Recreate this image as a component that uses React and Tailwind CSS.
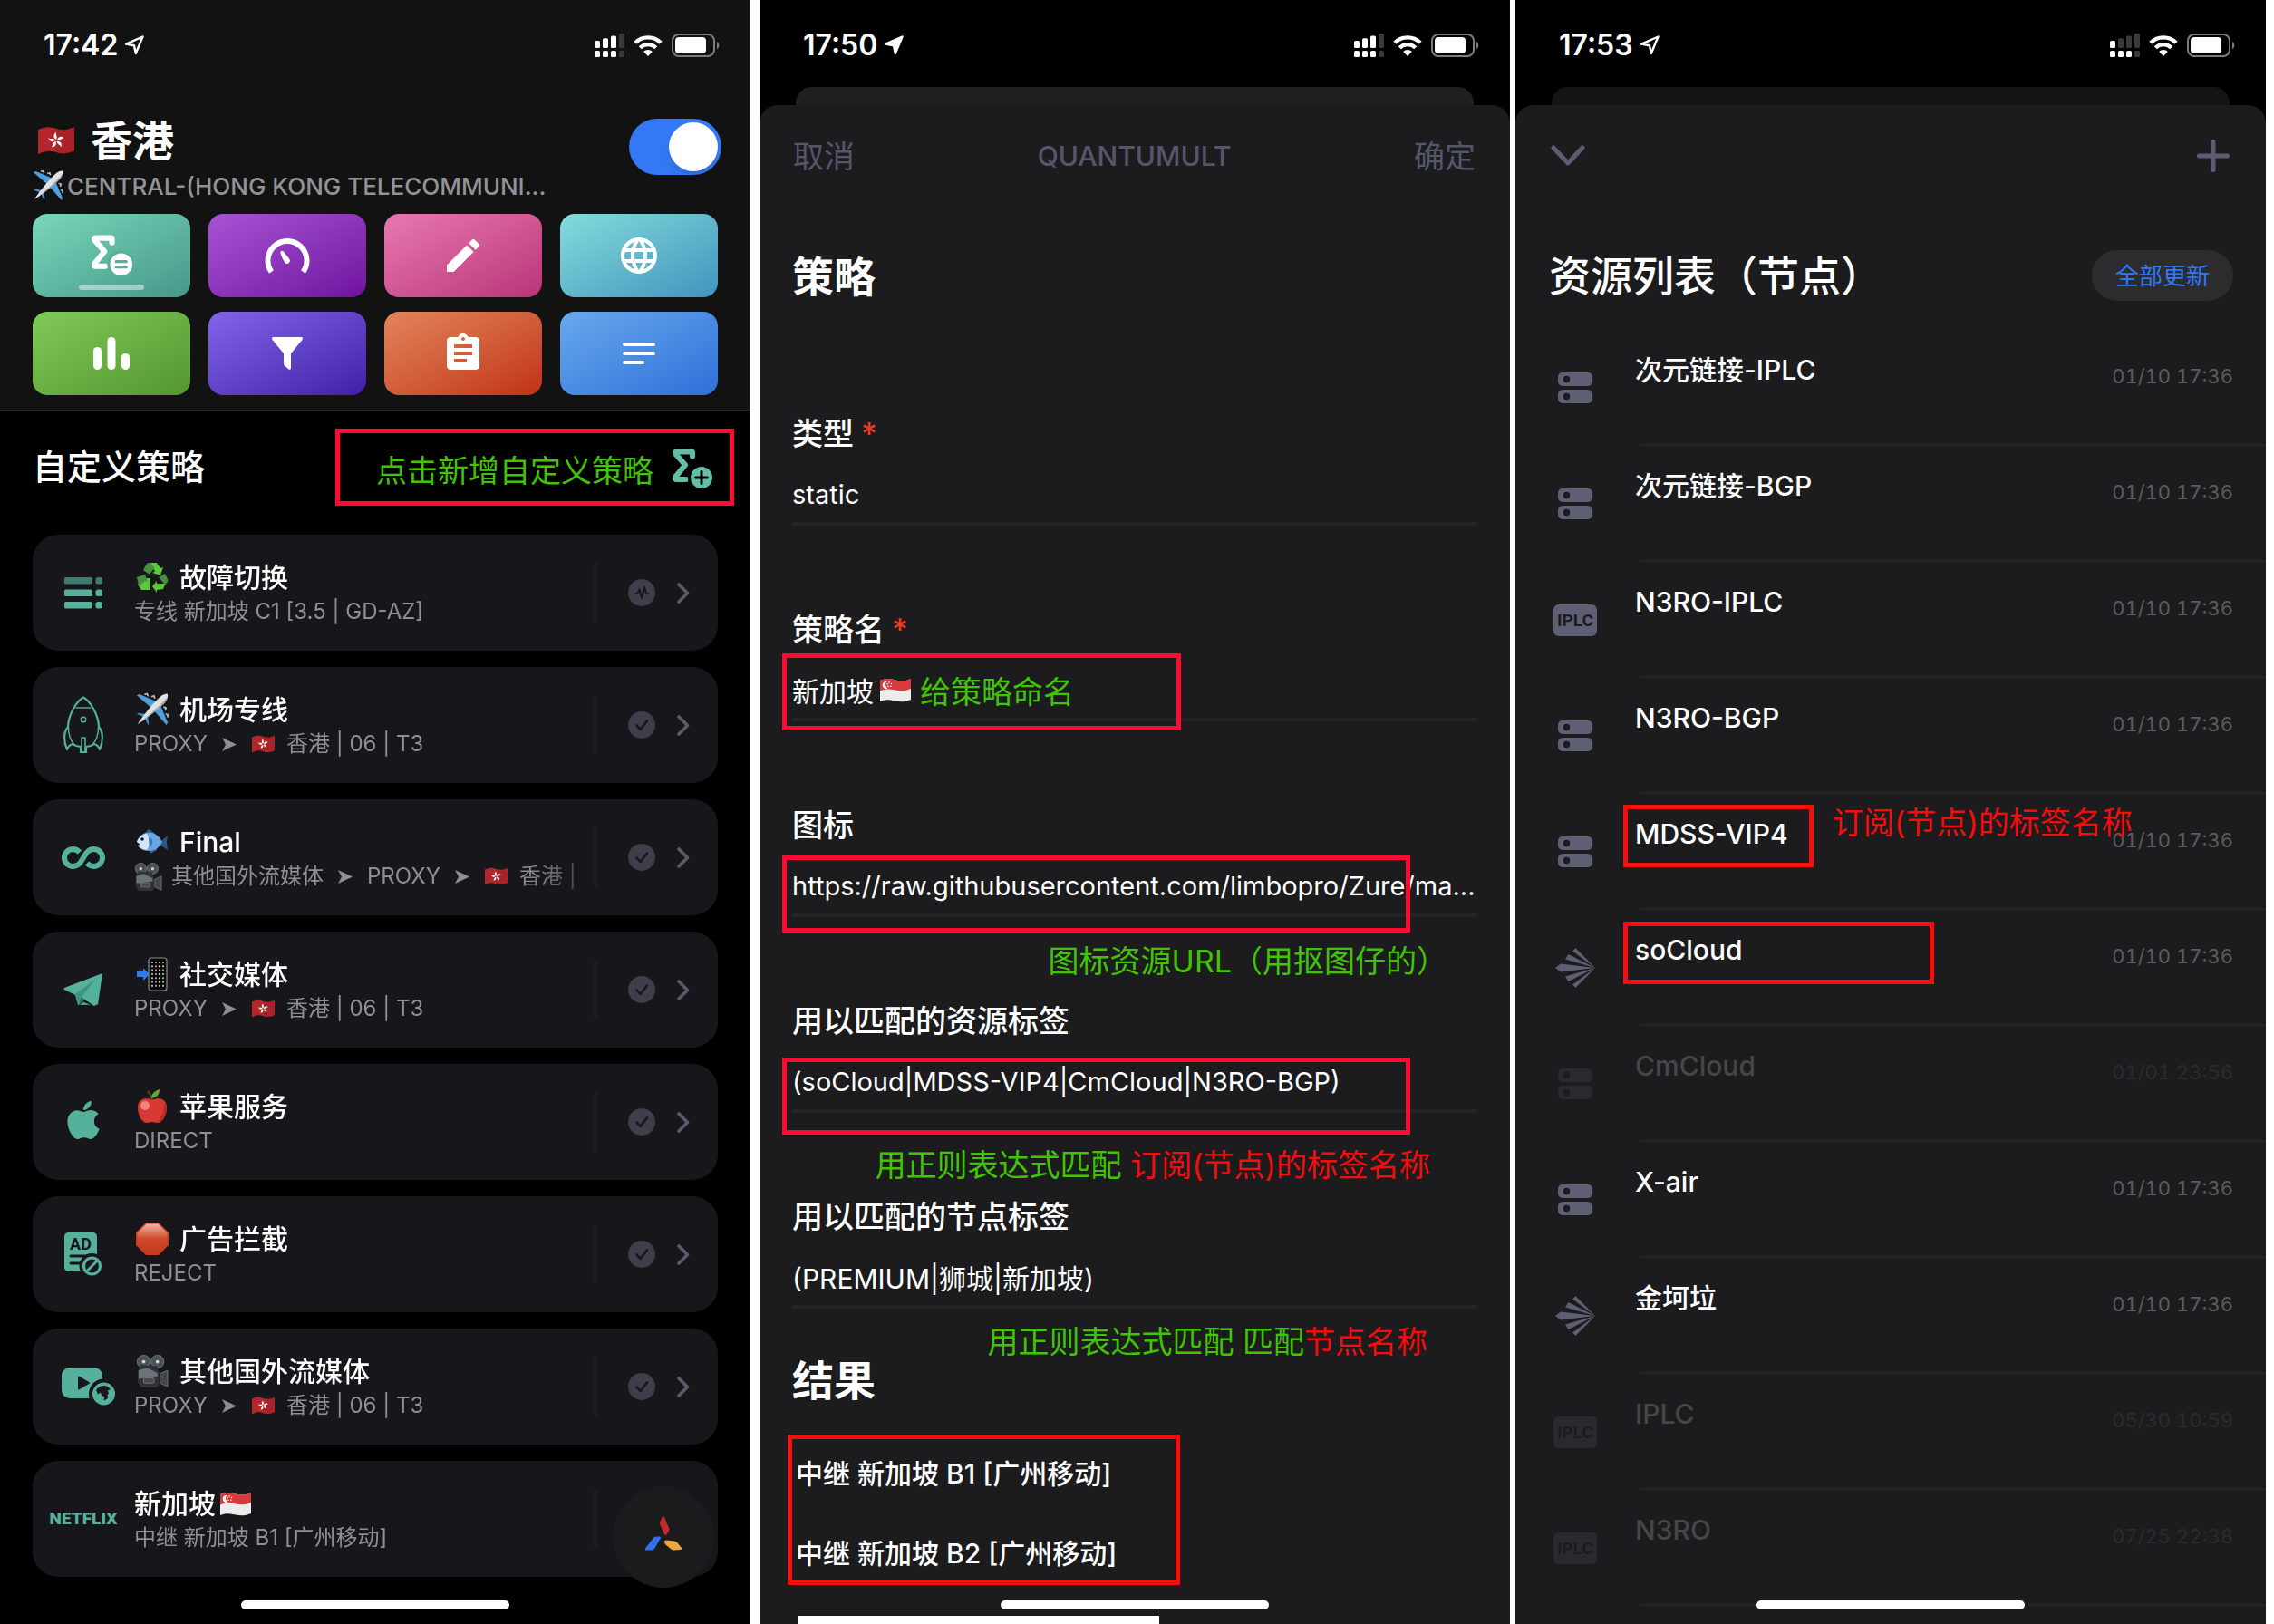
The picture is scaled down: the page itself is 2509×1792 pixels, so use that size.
import React from 'react';
import { MdEdit, MdLanguage, MdAssignment } from 'react-icons/md';
import { FaApple } from 'react-icons/fa';

/* ---------- status bar ---------- */

function LocationArrow({ filled }) {
  return (
    <svg width="24" height="24" viewBox="0 0 24 24" aria-hidden="true">
      <path
        d="M21.5 2.5 13.8 21 12 12.2 3 10.6Z"
        fill={filled ? 'white' : 'none'}
        stroke="white"
        strokeWidth="2.4"
        strokeLinejoin="round"
      />
    </svg>
  );
}

function Signal({ bars }) {
  return (
    <svg width="33" height="27" viewBox="0 0 33 27" aria-hidden="true">
      {[0, 1, 2, 3].map((i) => (
        <g key={i}>
          <rect x={i * 9} y={8 - i * 2.7} width="6" height={8 + i * 2.7} rx="1.6" fill={i < bars ? '#fff' : '#3a3a3a'} />
          <rect x={i * 9} y="19" width="6" height="7" rx="1.6" fill={i < 3 ? '#fff' : '#3a3a3a'} />
        </g>
      ))}
    </svg>
  );
}

function Wifi() {
  return (
    <svg width="32" height="24" viewBox="0 0 32 24" fill="none" stroke="white" strokeWidth="4.4" aria-hidden="true">
      <path d="M1.9 9.2a20 20 0 0 1 28.2 0" />
      <path d="M7.3 14.7a12.3 12.3 0 0 1 17.4 0" />
      <path d="M16 24l-4.9-5a6.9 6.9 0 0 1 9.8 0Z" fill="white" stroke="none" />
    </svg>
  );
}

function Battery() {
  return (
    <svg width="53" height="26" viewBox="0 0 53 26" aria-hidden="true">
      <rect x="1" y="1" width="46" height="24" rx="7" fill="none" stroke="#7c7c7c" strokeWidth="2" />
      <rect x="4" y="4" width="34" height="18" rx="4" fill="white" />
      <path d="M50 9c3 .8 3 7.200 0 8Z" fill="#7c7c7c" />
    </svg>
  );
}

function StatusBar({ time, filled, bars }) {
  return (
    <div className="flex h-24 shrink-0 items-center justify-between pt-1 pr-[34px] pl-12">
      <div className="flex items-center gap-1.5 text-[32px] leading-10 font-semibold">
        <span>{time}</span>
        <LocationArrow filled={filled} />
      </div>
      <div className="flex items-center gap-2.5">
        <Signal bars={bars} />
        <Wifi />
        <Battery />
      </div>
    </div>
  );
}

function HomeIndicator() {
  return <div className="absolute bottom-4 left-1/2 h-2.5 w-[296px] -translate-x-1/2 rounded-full bg-white" />;
}

/* ---------- pictograms ---------- */

function HkFlag({ className }) {
  return (
    <svg viewBox="0 0 42 32" className={className} aria-hidden="true">
      <path d="M1 4C10 0 15 1 21 3s12 2 20-2v26c-8 4-14 4-20 2S9 27 1 31Z" fill="#b5262c" />
      <path d="M21 3c6 2 12 2 20-2v26c-8 4-14 4-20 2Z" fill="#9f2127" opacity=".6" />
      <g fill="white">
        {[0, 72, 144, 216, 288].map((a) => (
          <path key={a} transform={`rotate(${a} 21 16)`} d="M21 15c-4-2.500-3-6.500 0-8C20 9.500 23 11.500 21 15Z" />
        ))}
      </g>
    </svg>
  );
}

function SgFlag({ className }) {
  return (
    <svg viewBox="0 0 36 27" className={className} aria-hidden="true">
      <path d="M1 3C9 0 13 1 18 2.500S28 4 35 1v23c-7 3-12 2.500-17 1.500S8 23 1 26Z" fill="#ececec" />
      <path d="M1 3C9 0 13 1 18 2.500S28 4 35 1v11c-7 3-12 2.500-17 1.500S8 11.500 1 14.500Z" fill="#d83a3e" />
      <path d="M8.500 4a4 4 0 1 0 1 7.500 4.600 4.600 0 0 1-1-7.500Z" fill="white" />
      <g fill="white">
        <circle cx="11" cy="5" r=".8" />
        <circle cx="13.500" cy="6.500" r=".8" />
        <circle cx="12.800" cy="9.300" r=".8" />
        <circle cx="10" cy="9.300" r=".8" />
        <circle cx="9.300" cy="6.800" r=".8" />
      </g>
    </svg>
  );
}

function Plane({ className }) {
  return (
    <svg viewBox="0 0 38 38" className={className} aria-hidden="true">
      <path d="M1 2.500 4 1l21 9-6 8Z" fill="#4f9fdc" />
      <path d="M35.500 37l1.500-3-9-21-8 6Z" fill="#4f9fdc" />
      <path d="M1 24l2-1 10 1.500-3 3.500ZM14 37l1-2-1.500-10-3.500 3Z" fill="#3f8ccb" />
      <path d="M10 1.500l3-1 1 3M18 4l3-1 1 3M36.500 28l1-3-3-1M34 20l1-3-3-1" fill="none" stroke="#b8bcc2" strokeWidth="1.800" />
      <path d="M2 36C6 29 22 9 29 3.500 33 .5 37.500-.5 37 2c.5 3-1 6-3.500 9C28 17 9 32 2 36Z" fill="#e2e2e4" />
      <path d="M2 36C9 32 28 17 33.500 11c2-2.500 3.500-5 3.600-7.500C33 10 14 27 2 36Z" fill="#a3a4a8" />
    </svg>
  );
}

function Recycle({ className }) {
  return (
    <svg viewBox="0 0 36 34" className={className} aria-hidden="true">
      <g fill="#5cc63d">
        <path d="M15 1h8l4 6 3-1-3 9-9-3 3-1.500Z" />
        <path d="M16 31H6l-4-6 4-7h10Z" />
        <path d="M18 27l5-6v3h7l3-1-3 7-7 1v3Z" />
      </g>
      <g fill="#478f42">
        <path d="M8 9l4-7c2-2 5-1 6 1l2 4-5 7Z" />
        <path d="M1 17l9-3 3 8-3-1-6 5-2-4Z" />
        <path d="M25 17l7-4 3 6c1 3-1 6-4 5Z" />
      </g>
    </svg>
  );
}

function Fish({ className }) {
  return (
    <svg viewBox="0 0 36 28" className={className} aria-hidden="true">
      <path d="M9 5 14 0l6 4 5 5-2 14-7 4-1-5Z" fill="#2f5f9a" />
      <path d="M27 14l8-7-1 7 1 9-9-6Z" fill="#2f5688" />
      <path d="M1 14C4 5 11 3 17 4c6 1 10 6 12 10-3 6-8 10-14 10C8 24 4 21 2 18l3-1Z" fill="#6aa6e4" />
      <path d="M1 14C4 7 9 5 12 5c3 4 4 13 0 18C8 23 4 20 2 18l3-1Z" fill="#d4e6f8" />
      <path d="M14 9c5 0 6 8 1 11Z" fill="#3f76b8" />
      <circle cx="7" cy="11" r="1.800" fill="#111" />
    </svg>
  );
}

function Phone({ className }) {
  const dots = ['#7be07b', '#f2f2f2', '#f27b4a', '#7bb7f2', '#f2d24a', '#c87bf2'];
  return (
    <svg viewBox="0 0 36 38" className={className} aria-hidden="true">
      <path d="M1 16h7v-4l7 7-7 7v-4H1Z" fill="#2f7bea" />
      <rect x="14" y="1" width="20" height="36" rx="3" fill="#0a0a0c" stroke="#8a8a8a" strokeWidth="1.200" />
      {[0, 1, 2, 3, 4, 5, 6].map((r) =>
        [0, 1, 2, 3].map((c) => (
          <rect key={`${r}-${c}`} x={17 + c * 4} y={5 + r * 4.3} width="2" height="2" rx=".6" fill={dots[(r * 3 + c * 5) % 6]} />
        )),
      )}
    </svg>
  );
}

function RedApple({ className }) {
  return (
    <svg viewBox="0 0 36 38" className={className} aria-hidden="true">
      <path d="M18 12C17 7 15 4 13 2" fill="none" stroke="#6b3a1c" strokeWidth="2" />
      <path d="M17 10c0-5 3-8 9-10 0 6-3 9-9 10Z" fill="#5cab35" />
      <path d="M18 12c-5-3-16-3-16 8 0 9 5 17 10 17 2 0 4-1 6-1s4 1 6 1c5 0 10-8 10-17 0-11-11-11-16-8Z" fill="#d63a33" />
      <ellipse cx="10" cy="18" rx="5" ry="5" fill="#f39a8e" opacity=".8" />
      <path d="M31 14c6 8 0 22-7 23 4-5 8-14 7-23Z" fill="#a51f22" opacity=".6" />
    </svg>
  );
}

function StopSign({ className }) {
  return (
    <svg viewBox="0 0 36 36" className={className} aria-hidden="true">
      <defs>
        <linearGradient id="stop-shine" x1="0" y1="0" x2="0" y2="1">
          <stop offset="0" stopColor="#efb6a6" />
          <stop offset=".5" stopColor="#cf4a2c" />
          <stop offset="1" stopColor="#c4391c" />
        </linearGradient>
      </defs>
      <path d="M11 0h14l11 11v14L25 36H11L0 25V11Z" fill="#c93a1d" />
      <path d="M11.500 1.500h13l10 10v13l-10 10h-13l-10-10v-13Z" fill="url(#stop-shine)" />
    </svg>
  );
}

function Camera({ className }) {
  return (
    <svg viewBox="0 0 38 38" className={className} aria-hidden="true">
      <circle cx="9" cy="8" r="7.500" fill="#4c5258" stroke="#767b80" />
      <circle cx="25" cy="8" r="7.500" fill="#4c5258" stroke="#767b80" />
      <circle cx="9" cy="8" r="2" fill="#c9d0d6" />
      <circle cx="25" cy="8" r="2" fill="#c9d0d6" />
      <path d="M6 12l18 1 3 8v14l-3 3H6l-4-7 1-14Z" fill="#2f3236" />
      <path d="M3 18l10-3 12 6v4L3 28Z" fill="#6b7379" />
      <rect x="9" y="27" width="12" height="6" rx="1" fill="#474b50" stroke="#777" />
      <path d="M28 22l9-4v19l-9-4Z" fill="#3f464d" stroke="#6b7278" />
    </svg>
  );
}

function Sigma({ sign, className, cut }) {
  return (
    <svg viewBox="0 0 46 45" className={className} aria-hidden="true">
      <path d="M23 8.500V4.500Q23 3.500 22 3.500H5.500Q3 3.500 4.500 6L15 18 4.500 31Q3 34 5.500 34H16" fill="none" stroke="currentColor" strokeWidth="6" strokeLinecap="round" strokeLinejoin="round" />
      <circle cx="33" cy="32" r="15" fill={cut} />
      <circle cx="33" cy="32" r="12" fill="currentColor" />
      {sign === 'equal' ? (
        <path d="M27.500 29h11M27.500 35h11" stroke={cut} strokeWidth="3" strokeLinecap="round" />
      ) : (
        <path d="M26.500 32h13M33 25.500v13" stroke={cut} strokeWidth="3" strokeLinecap="round" />
      )}
    </svg>
  );
}

/* ---------- first screen ---------- */

function GaugeIcon() {
  return (
    <svg width="50" height="42" viewBox="0 0 50 42" fill="none" aria-hidden="true">
      <path d="M7.500 39A21.500 21.500 0 1 1 42.500 39" stroke="white" strokeWidth="6" />
      <path d="M17.500 16.500c1-1.500 2.500-.8 3.500.3l6.500 8.200c1.500 2.500-1.500 6.500-4.500 4.500-1.500-1-6.500-11-5.500-13Z" fill="white" />
    </svg>
  );
}

const tiles = [
  {
    name: '策略',
    bg: 'from-[#7ad6ba] to-[#45988a]',
    icon: <Sigma sign="equal" cut="#56ae9c" className="h-[46px] w-[47px] text-white" />,
    active: true,
  },
  { name: '测速', bg: 'from-[#a852d4] to-[#7010a0]', icon: <GaugeIcon /> },
  { name: '编辑', bg: 'from-[#e878b0] to-[#b83478]', icon: <MdEdit className="size-12 text-white" /> },
  { name: '网络', bg: 'from-[#84dcda] to-[#4294be]', icon: <MdLanguage className="size-12 text-white" /> },
  {
    name: '统计',
    bg: 'from-[#80ca58] to-[#549630]',
    icon: (
      <svg width="42" height="36" viewBox="0 0 42 36" fill="white" aria-hidden="true">
        <rect x="1" y="11" width="9" height="25" rx="4.500" />
        <rect x="16.500" y="0" width="9" height="36" rx="4.500" />
        <rect x="32" y="18" width="9" height="18" rx="4.500" />
      </svg>
    ),
  },
  {
    name: '过滤',
    bg: 'from-[#8464e8] to-[#421ea8]',
    icon: (
      <svg width="34" height="36" viewBox="0 0 34 36" fill="white" aria-hidden="true">
        <path d="M1 0h32q1.500 1 .5 3L21 18v16.500q-.5 2-2.500 1l-4.500-4q-1-1-1-2V18L.5 3Q-.5 1 1 0Z" />
      </svg>
    ),
  },
  { name: '日志', bg: 'from-[#e2845c] to-[#c03014]', icon: <MdAssignment className="size-12 text-white" /> },
  {
    name: '更多',
    bg: 'from-[#68a8ec] to-[#2e70d8]',
    icon: (
      <svg width="38" height="26" viewBox="0 0 38 26" stroke="white" strokeWidth="4" strokeLinecap="round" aria-hidden="true">
        <path d="M3 3h32M3 13h32M3 23h20" />
      </svg>
    ),
  },
];

function Rocket() {
  return (
    <svg width="44" height="64" viewBox="0 0 44 64" fill="none" stroke="#55b09c" strokeWidth="2.200" strokeLinejoin="round" aria-hidden="true">
      <path d="M22 1.500C14 6 5.500 21 5 34 0 40 0 50 4 59c1-3 3-5 6-6l4 2 5 1v6h6v-6l5-1 4-2c3 1 5 3 6 6 4-9 4-19-1-25C38.500 21 30 6 22 1.500Z" />
      <path d="M13.500 13h17" strokeWidth="1.400" />
      <circle cx="22" cy="26" r="2.800" strokeWidth="1.400" />
      <path d="M5.500 34c0 9 3 16 6 19M38.500 34c0 9-3 16-6 19" strokeWidth="1.400" />
      <path d="M20 62V46h4v16" strokeWidth="1.600" />
    </svg>
  );
}

function ListIcon() {
  return (
    <svg width="42" height="35" viewBox="0 0 42 35" fill="#55b09c" aria-hidden="true">
      {[0, 13.5, 27].map((y) => (
        <g key={y} opacity={y === 0 ? 0.65 : 1}>
          <rect x="0" y={y} width="31" height="7.500" rx="1.500" />
          <rect x="34.500" y={y} width="7.500" height="7.500" rx="2.500" />
        </g>
      ))}
    </svg>
  );
}

function InfinityIcon() {
  return (
    <svg width="48" height="25" viewBox="0 0 48 25" fill="none" stroke="#55b09c" strokeWidth="6" aria-hidden="true">
      <path d="M20 6.500C17.500 4 15 3 12.500 3a9.500 9.500 0 0 0 0 19c3.500 0 6-1.500 8-4L27.500 7c2-2.500 4.500-4 8-4a9.500 9.500 0 0 1 0 19c-2.500 0-5-1-7.500-3.500" />
    </svg>
  );
}

function TelegramPlane() {
  return (
    <svg width="44" height="38" viewBox="0 0 44 38" aria-hidden="true">
      <path d="M43 1 1 17q-1 1 0 2l12 6 3 11 22-.5Z" fill="#55b09c" />
      <path d="M43 1 36 35.500q-1 2-3 1.200L20 27Z" fill="#55b09c" />
      <path d="M35 8 13 24l4 12 3-9Z" fill="#3f9382" />
      <path d="M20 28l-3 8.500L22 33l12 4-6-4Z" fill="#17171b" />
      <path d="M20 27l-3 9 7-6Z" fill="#2e6a60" />
    </svg>
  );
}

function AdIcon() {
  return (
    <div className="relative h-[48px] w-[42px]">
      <svg width="42" height="48" viewBox="0 0 42 48" aria-hidden="true">
        <rect x="0" y="0" width="36" height="43" rx="4.500" fill="#55b09c" />
        <path d="M7 26h18M7 34h10" stroke="#17171b" strokeWidth="3" strokeLinecap="round" />
        <circle cx="30.500" cy="37" r="14" fill="#17171b" />
        <circle cx="30.500" cy="37" r="9" fill="none" stroke="#55b09c" strokeWidth="3.200" />
        <path d="M24.500 43l12-12" stroke="#55b09c" strokeWidth="3" />
      </svg>
      <span className="absolute top-1 left-0 w-9 text-center font-['Roboto',sans-serif] text-[18px] leading-[18px] font-bold text-[#17171b]">AD</span>
    </div>
  );
}

function PlayGlobe() {
  return (
    <svg width="60" height="42" viewBox="0 0 60 42" className="ml-3" aria-hidden="true">
      <rect x="0" y="0" width="45" height="34" rx="9" fill="#55b09c" />
      <path d="M18 10.500v13q.3 1.500 1.500.8l11-6.500q1-.8 0-1.600l-11-6.500q-1.200-.7-1.500.8Z" fill="#17171b" />
      <circle cx="46.500" cy="29" r="16.500" fill="#17171b" />
      <circle cx="46.500" cy="29" r="12.500" fill="#55b09c" />
      <path d="M38 25c1.500-3 5-5 8.500-5 4 0 6 2 7.500 4.500l-3 .5 1 4-2 1c2 2 1.500 4-.5 5l-3 1.500.5-4.500-3-1-1-3.500-3 2Z" fill="#17171b" />
    </svg>
  );
}

function Netflix() {
  return <span className="font-['Roboto',sans-serif] text-[19px] leading-8 font-black text-[#55b09c]">NETFLIX</span>;
}

function Arrow() {
  return (
    <svg width="16" height="15" viewBox="0 0 16 15" className="mx-4 shrink-0" fill="#8e8e93" aria-hidden="true">
      <path d="M0 0 16 7.500 0 15l4-7.500Z" />
    </svg>
  );
}

const proxyLine = (
  <>
    PROXY
    <Arrow />
    <HkFlag className="mr-3 h-5 w-[27px] shrink-0" />
    香港 | 06 | T3
  </>
);

const emoji = 'mr-3 ml-0.5 h-[38px] w-9 shrink-0';

const policies = [
  { icon: <ListIcon />, mark: <Recycle className={emoji} />, name: '故障切换', sub: '专线 新加坡 C1 [3.5 | GD-AZ]', pulse: true },
  { icon: <Rocket />, mark: <Plane className={emoji} />, name: '机场专线', sub: proxyLine },
  {
    icon: <InfinityIcon />,
    mark: <Fish className={emoji} />,
    name: 'Final',
    sub: (
      <>
        <Camera className="mr-2.5 size-[31px] shrink-0" />
        其他国外流媒体
        <Arrow />
        PROXY
        <Arrow />
        <HkFlag className="mr-3 h-5 w-[27px] shrink-0" />
        香港 |
      </>
    ),
  },
  { icon: <TelegramPlane />, mark: <Phone className={emoji} />, name: '社交媒体', sub: proxyLine },
  { icon: <FaApple className="mb-1 size-[48px] text-[#55b09c]" />, mark: <RedApple className={emoji} />, name: '苹果服务', sub: 'DIRECT' },
  { icon: <AdIcon />, mark: <StopSign className={emoji} />, name: '广告拦截', sub: 'REJECT' },
  { icon: <PlayGlobe />, mark: <Camera className={emoji} />, name: '其他国外流媒体', sub: proxyLine },
  { icon: <Netflix />, name: '新加坡', after: <SgFlag className="ml-1 h-[27px] w-9" />, sub: '中继 新加坡 B1 [广州移动]' },
];

function PolicyCard({ policy }) {
  return (
    <li className="flex h-32 items-center rounded-[28px] bg-[#17171b] pr-[31px]">
      <div className="flex w-28 shrink-0 items-center justify-center">{policy.icon}</div>
      <div className="flex min-w-0 flex-1 flex-col self-start pt-[27px] whitespace-nowrap [mask-image:linear-gradient(to_right,black_88%,rgba(0,0,0,0.4))]">
        <div className="flex items-center text-[30px] leading-10 font-medium">
          {policy.mark}
          {policy.name}
          {policy.after}
        </div>
        <div className="flex h-9 items-center text-[24px] leading-9 text-[#8e8e93]">{policy.sub}</div>
      </div>
      <div className="ml-4 h-[68px] w-1 shrink-0 rounded-full bg-[#1d1d21]" />
      <svg width="30" height="30" viewBox="0 0 30 30" className="mr-6 ml-[34px] shrink-0" fill="none" stroke="#17171b" strokeWidth="2.600" strokeLinecap="round" strokeLinejoin="round" aria-hidden="true">
        <circle cx="15" cy="15" r="15" fill="#3f3f4b" stroke="none" />
        {policy.pulse ? <path d="M7.500 16h3l2-5 2.500 10 3-12 2 7h2.500" strokeWidth="2" /> : <path d="M9.500 15.500l4 4.500 7.500-9.500" />}
      </svg>
      <svg width="14" height="23" viewBox="0 0 14 23" className="shrink-0" fill="none" stroke="#5a5a6c" strokeWidth="3.600" strokeLinecap="round" strokeLinejoin="round" aria-hidden="true">
        <path d="M2 2l9.500 9.500L2 21" />
      </svg>
    </li>
  );
}

function HomeScreen() {
  return (
    <main className="relative mr-2.5 flex min-w-0 flex-1 flex-col overflow-hidden bg-black">
      <header className="border-b border-[#262628] bg-[#121212]">
        <StatusBar time="17:42" bars={3} />
        <div className="flex justify-between pt-[31px] pr-8 pl-9">
          <div className="min-w-0">
            <h1 className="flex h-14 items-center text-[46px] leading-14 font-bold">
              <HkFlag className="mr-4 ml-1 h-8 w-[44px]" />
              香港
            </h1>
            <p className="flex h-11 items-center text-[26px] font-medium text-[#929297]">
              <Plane className="mr-1 size-[34px]" />
              CENTRAL-(HONG KONG TELECOMMUNI...
            </p>
          </div>
          <input
            type="checkbox"
            role="switch"
            aria-label="香港"
            defaultChecked
            className="mt-1 h-[62px] w-[102px] shrink-0 appearance-none rounded-full bg-[#3478f6] before:mt-1 before:ml-11 before:block before:size-[54px] before:rounded-full before:bg-white before:shadow-lg before:content-['']"
          />
        </div>
        <nav className="grid grid-cols-4 gap-x-5 gap-y-4 px-9 pt-[9px] pb-4">
          {tiles.map((t) => (
            <button key={t.name} aria-label={t.name} className={`relative flex h-[92px] items-center justify-center rounded-[16px] bg-linear-to-br ${t.bg}`}>
              {t.icon}
              {t.active && <span className="absolute bottom-2 left-1/2 h-1.5 w-[72px] -translate-x-1/2 rounded-full bg-white/45" />}
            </button>
          ))}
        </nav>
      </header>
      <div className="flex items-start justify-between pt-5 pr-[18px] pb-8 pl-9">
        <h2 className="text-[38px] leading-[85px] font-medium">自定义策略</h2>
        <button className="flex h-[85px] w-[440px] items-center justify-end gap-5 border-5 border-[#ff0a33] pt-1 pr-4.5 text-[34px] text-[#41c406]">
          <span className="pt-1">点击新增自定义策略</span>
          <Sigma sign="plus" cut="#000" className="h-[45px] w-[46px] text-[#62bfa6]" />
        </button>
      </div>
      <ul className="flex flex-col gap-[18px] px-9">
        {policies.map((p) => (
          <PolicyCard key={p.name} policy={p} />
        ))}
      </ul>
      <button aria-label="Quantumult X" className="absolute right-10 bottom-10 flex size-28 items-center justify-center rounded-full bg-[#1b1b1d] pb-2">
        <svg width="42" height="38" viewBox="0 0 42 38" aria-hidden="true">
          <path d="M19.500 1q1.500-1.500 2.500 0l5 12q1 2 0 3l-2.500 4.500q-1.500 1-2.500-.5L17.500 10q-.8-1.500-.4-3Z" fill="#c32a2a" />
          <path d="M10 24q1-1.500 3-1.500h4q1.500.3.800 2L11 36q-1 1.500-3 1.500H2Q0 37.500 1 35.500Z" fill="#2f72f0" />
          <path d="M22 28q0-1.500 2-1.500l9 1q2 .3 3 1.500l5 6q1 1.500-1 2l-7 .5q-2 0-3.500-1l-6-5Q22 30 22 28Z" fill="#eaa640" />
        </svg>
      </button>
      <HomeIndicator />
    </main>
  );
}

/* ---------- sheets ---------- */

function SheetScreen({ time, filled, bars, back, className, children }) {
  return (
    <main className={`relative flex min-w-0 flex-1 flex-col overflow-hidden bg-black ${className}`}>
      <StatusBar time={time} filled={filled} bars={bars} />
      <div className={`mx-10 h-5 shrink-0 rounded-t-[18px] ${back}`} />
      <div className="flex flex-1 flex-col rounded-t-[20px] bg-[#1c1c1e]">{children}</div>
      <HomeIndicator />
    </main>
  );
}

function Field({ id, label, required, value, inputClass = 'w-full text-[29px]', after, children }) {
  return (
    <div className="relative">
      <label htmlFor={id} className="block h-12 text-[34px] leading-12 font-medium">
        {label}
        {required && <span className="ml-2 text-[#f03a20]">*</span>}
      </label>
      <div className="flex h-[77px] items-center border-b-4 border-[#242425] pt-[11px]">
        <input id={id} defaultValue={value} className={`h-12 min-w-0 bg-transparent outline-none ${inputClass}`} />
        {after}
      </div>
      {children}
    </div>
  );
}

const note = 'absolute text-[34px] leading-10 whitespace-nowrap text-[#41c406]';
const frame = 'pointer-events-none absolute border-5 border-[#ff0a33]';

function PolicyForm() {
  return (
    <SheetScreen time="17:50" filled bars={3} back="bg-[#202022]" className="mr-1.5">
      <div className="flex h-28 items-center justify-between pr-[37px] pl-9 text-[#56566a]">
        <button className="w-[70px] text-[34px]">取消</button>
        <span className="text-[30px] font-medium">QUANTUMULT</span>
        <button className="w-[70px] text-[34px]">确定</button>
      </div>
      <form className="flex flex-col pt-[49px] pr-[37px] pl-9">
        <h1 className="text-[46px] leading-14 font-bold">策略</h1>
        <div className="mt-[122px] flex flex-col gap-[91px]">
          <Field id="type" label="类型" required value="static" />
          <Field id="name" label="策略名" required value="新加坡" inputClass="w-24 text-[30px]" after={<SgFlag className="h-[27px] w-9" />}>
            <div className={`${frame} top-[50px] -left-[11px] h-[85px] w-[440px]`} />
            <span className={`${note} top-[73px] left-[141px]`}>给策略命名</span>
          </Field>
          <Field id="icon" label="图标" value="https://raw.githubusercontent.com/limbopro/Zure/ma...">
            <div className={`${frame} top-[57px] -left-[11px] h-[85px] w-[693px]`} />
            <span className={`${note} top-[154px] right-8`}>图标资源URL（用抠图仔的）</span>
          </Field>
          <Field id="source-tag" label="用以匹配的资源标签" value="(soCloud|MDSS-VIP4|CmCloud|N3RO-BGP)">
            <div className={`${frame} top-16 -left-[11px] h-[85px] w-[693px]`} />
            <span className={`${note} top-[163px] right-[51px]`}>
              用正则表达式匹配 <span className="text-[#f50c0c]">订阅(节点)的标签名称</span>
            </span>
          </Field>
          <Field id="node-tag" label="用以匹配的节点标签" value="(PREMIUM|狮城|新加坡)" inputClass="w-full text-[30px]">
            <span className={`${note} top-[142px] right-[54px]`}>
              用正则表达式匹配 匹配<span className="text-[#f50c0c]">节点名称</span>
            </span>
          </Field>
        </div>
        <h2 className="mt-[51px] text-[46px] leading-14 font-bold">结果</h2>
        <div className="relative mt-[31px] pl-1">
          <ul className="text-[30px] leading-[88px] font-medium">
            <li>中继 新加坡 B1 [广州移动]</li>
            <li>中继 新加坡 B2 [广州移动]</li>
          </ul>
          <div className="pointer-events-none absolute top-px -left-[5px] h-[166px] w-[433px] border-5 border-[#f50c0c]" />
        </div>
        <div className="mt-[25px] ml-1.5 h-[9px] w-[399px] bg-white" />
      </form>
    </SheetScreen>
  );
}

function ServerIcon() {
  return (
    <svg width="38" height="34" viewBox="0 0 38 34" aria-hidden="true">
      <rect width="38" height="15" rx="5" fill="#5e5e74" />
      <rect y="19" width="38" height="15" rx="5" fill="#5e5e74" />
      <circle cx="9.500" cy="7.500" r="3.700" fill="#1c1c1e" />
      <circle cx="9.500" cy="26.500" r="3.700" fill="#1c1c1e" />
    </svg>
  );
}

function IplcIcon() {
  return (
    <span className="flex h-[35px] w-12 items-center justify-center rounded-[6px] bg-[#5e5e74] font-['Roboto',sans-serif] text-[19px] leading-none font-bold text-[#1c1c1e]">
      IPLC
    </span>
  );
}

function FanIcon() {
  return (
    <svg width="44" height="44" viewBox="0 0 44 44" fill="#5e5e74" aria-hidden="true">
      <path d="M44 22 6 26.500 0 22l6-4.500Z" />
      <path d="M44 22 11 12.500 14.500 7Z" />
      <path d="M44 22 19 3.500 22.500 0Z" />
      <path d="M44 22 11 31.500 14.500 37Z" />
      <path d="M44 22 19 40.500 22.500 44Z" />
    </svg>
  );
}

const icons = { server: <ServerIcon />, iplc: <IplcIcon />, fan: <FanIcon /> };

const resources = [
  { name: '次元链接-IPLC', icon: 'server', date: '01/10 17:36' },
  { name: '次元链接-BGP', icon: 'server', date: '01/10 17:36' },
  { name: 'N3RO-IPLC', icon: 'iplc', date: '01/10 17:36' },
  { name: 'N3RO-BGP', icon: 'server', date: '01/10 17:36' },
  {
    name: 'MDSS-VIP4',
    icon: 'server',
    date: '01/10 17:36',
    overlay: (
      <>
        <div className="pointer-events-none absolute top-3 -left-[13px] h-[69px] w-[210px] border-5 border-[#f50c0c]" />
        <span className="absolute top-3 left-[218px] text-[34px] leading-10 whitespace-nowrap text-[#f50c0c]">订阅(节点)的标签名称</span>
      </>
    ),
  },
  {
    name: 'soCloud',
    icon: 'fan',
    date: '01/10 17:36',
    overlay: <div className="pointer-events-none absolute top-[13px] -left-[13px] h-[69px] w-[343px] border-5 border-[#f50c0c]" />,
  },
  { name: 'CmCloud', icon: 'server', date: '01/01 23:56', off: true },
  { name: 'X-air', icon: 'server', date: '01/10 17:36' },
  { name: '金坷垃', icon: 'fan', date: '01/10 17:36' },
  { name: 'IPLC', icon: 'iplc', date: '05/30 10:59', off: true },
  { name: 'N3RO', icon: 'iplc', date: '07/25 22:38', off: true },
];

function ResourceList() {
  return (
    <SheetScreen time="17:53" bars={1} back="bg-[#141414]" className="">
      <div className="flex h-28 items-center justify-between pr-10 pl-[39px]">
        <button aria-label="关闭">
          <svg width="38" height="24" viewBox="0 0 38 24" fill="none" stroke="#5c5c72" strokeWidth="5" strokeLinecap="round" strokeLinejoin="round" aria-hidden="true">
            <path d="M3 3l16 17L35 3" />
          </svg>
        </button>
        <button aria-label="添加">
          <svg width="36" height="36" viewBox="0 0 36 36" stroke="#5c5c72" strokeWidth="5" strokeLinecap="round" aria-hidden="true">
            <path d="M18 2.500v31M2.500 18h31" />
          </svg>
        </button>
      </div>
      <div className="mt-12 flex h-14 items-center justify-between pr-9 pl-[37px]">
        <h1 className="text-[46px] leading-14 font-medium">资源列表（节点）</h1>
        <button className="h-14 rounded-full bg-[#2c2c2e] px-[26px] text-[26px] text-[#2f78fa]">全部更新</button>
      </div>
      <ul className="mt-8">
        {resources.map((r) => (
          <li key={r.name} className="flex h-32">
            <div className={`flex w-[132px] shrink-0 items-center justify-center ${r.off ? 'opacity-20' : ''}`}>{icons[r.icon]}</div>
            <div className="relative flex min-w-0 flex-1 flex-col">
              <div className="flex flex-1 items-start justify-between pr-9">
                <span className={`pt-5 text-[30px] leading-12 font-medium ${r.off ? 'text-[#464648]' : ''}`}>{r.name}</span>
                <time className={`pt-[27px] text-[22px] leading-12 tabular-nums ${r.off ? 'text-[#2b2b2d]' : 'text-[#5c5c5f]'}`}>{r.date}</time>
              </div>
              <div className="ml-1.5 h-0.5 bg-[#252527]" />
              {r.overlay}
            </div>
          </li>
        ))}
      </ul>
    </SheetScreen>
  );
}

export default function App() {
  return (
    <div className="flex min-h-screen bg-white pr-[9px] font-['Inter','Noto_Sans_CJK_SC',sans-serif] text-white">
      <HomeScreen />
      <PolicyForm />
      <ResourceList />
    </div>
  );
}
